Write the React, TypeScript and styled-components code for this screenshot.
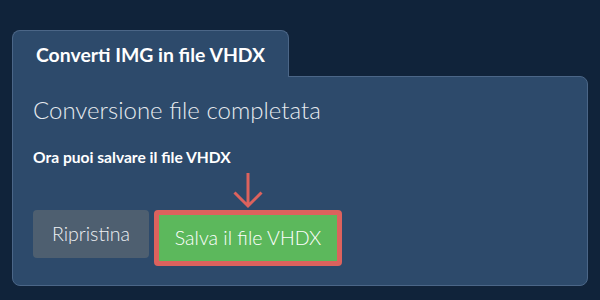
import React from "react";
import styled, { createGlobalStyle } from "styled-components";

const Global = createGlobalStyle`
  html, body { margin: 0; padding: 0; background: #10233a; }
  body { font-family: Lato, "Open Sans", sans-serif; }
  * { box-sizing: border-box; }
`;

const ZWNJ = "\u200C";

const Page = styled.div`
  width: 600px;
  height: 300px;
  padding: 30px 12px 0 12px;
  background: #10233a;
  display: flex;
  flex-direction: column;
  align-items: flex-start;
`;

const Tab = styled.div`
  position: relative;
  z-index: 1;
  width: 277px;
  height: 47px;
  margin-bottom: -1px;
  padding: 0 0 0 23px;
  display: flex;
  align-items: center;
  background: #2d4a6b;
  border: 1px solid #4b6687;
  border-bottom: none;
  border-radius: 8px 8px 0 0;
`;

const TabTitle = styled.span`
  font-size: 19.4px;
  font-weight: 700;
  color: #ffffff;
  line-height: 1.2;
  margin-top: 1px;
`;

const Panel = styled.div`
  width: 576px;
  height: 210px;
  background: #2d4a6b;
  border: 1px solid #4b6687;
  border-radius: 0 8px 8px 8px;
  padding: 19px 20px 0 20px;
  display: flex;
  flex-direction: column;
`;

const Heading = styled.h2`
  margin: 0;
  font-size: 24px;
  font-weight: 300;
  line-height: 1.2;
  color: #e6eaef;
`;

const Subtitle = styled.p`
  margin: 23px 0 0 0;
  font-size: 15.6px;
  font-weight: 700;
  line-height: 1.2;
  color: #ffffff;
`;

const ButtonRow = styled.div`
  margin-top: 43px;
  display: flex;
  align-items: flex-start;
  gap: 5px;
`;

const ResetButton = styled.button`
  height: 48px;
  width: 116px;
  border: none;
  border-radius: 4px;
  background: #4e5f70;
  color: #eef1f4;
  font-family: Lato, sans-serif;
  font-size: 19.6px;
  font-weight: 300;
  padding: 0;
`;

const Highlight = styled.div`
  position: relative;
  border: 5px solid #dc625d;
  border-radius: 4px;
`;

const SaveButton = styled.button`
  display: block;
  height: 46px;
  width: 178px;
  border: none;
  background: #5cb85c;
  color: #ffffff;
  font-family: Lato, sans-serif;
  font-size: 19.6px;
  font-weight: 300;
  padding: 0;
`;

const Arrow = styled.svg`
  position: absolute;
  left: 74px;
  top: -42px;
  width: 30px;
  height: 36px;
`;

export default function App() {
  return (
    <>
      <Global />
      <Page>
        <Tab>
          <TabTitle>{`Conver${ZWNJ}ti IMG in file VHDX`}</TabTitle>
        </Tab>
        <Panel>
          <Heading>Conversione file completata</Heading>
          <Subtitle>Ora puoi salvare il file VHDX</Subtitle>
          <ButtonRow>
            <ResetButton>{`Ripris${ZWNJ}tina`}</ResetButton>
            <Highlight>
              <Arrow viewBox="0 0 30 36">
                <path
                  d="M15 0 V33 M1.5 19.5 L15 33 L28.5 19.5"
                  fill="none"
                  stroke="#dc625d"
                  strokeWidth="3"
                />
              </Arrow>
              <SaveButton>Salva il file VHDX</SaveButton>
            </Highlight>
          </ButtonRow>
        </Panel>
      </Page>
    </>
  );
}
